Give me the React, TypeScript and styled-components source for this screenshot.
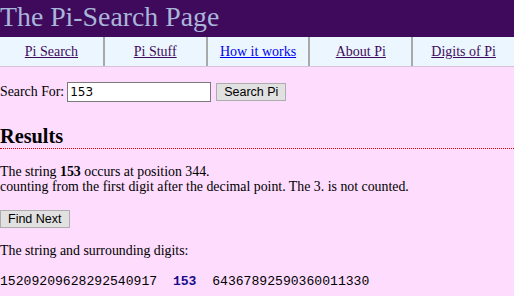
import React from "react";
import styled, { createGlobalStyle } from "styled-components";

const GlobalStyle = createGlobalStyle`
  html, body {
    margin: 0;
    padding: 0;
    background: #fddcfd;
  }
  body {
    font-family: "Liberation Serif", "Times New Roman", serif;
    font-size: 13.85px;
    color: #000;
  }
`;

const links = [
  { label: "Pi Search", visited: true },
  { label: "Pi Stuff", visited: true },
  { label: "How it works", visited: false },
  { label: "About Pi", visited: true },
  { label: "Digits of Pi", visited: true },
];

function App() {
  return (
    <Page>
      <GlobalStyle />
      <Header>
        <Title>The Pi-Search Page</Title>
      </Header>
      <Nav>
        {links.map((l) => (
          <NavCell key={l.label}>
            <NavLink href="#" $visited={l.visited}>
              {l.label}
            </NavLink>
          </NavCell>
        ))}
      </Nav>

      <SearchForm onSubmit={(e) => e.preventDefault()}>
        <label htmlFor="q">Search For:</label>
        <SearchInput id="q" defaultValue="153" />
        <Button type="submit">Search Pi</Button>
      </SearchForm>

      <Results>Results</Results>

      <Para $top={15}>
        The string <b>153</b> occurs at position 344.
        <br />
        counting from the first digit after the decimal point. The 3. is not
        counted.
      </Para>

      <Button type="button">Find Next</Button>

      <Para $top={15}>The string and surrounding digits:</Para>

      <Digits>
        15209209628292540917{"  "}
        <Match>153</Match>
        {"  "}64367892590360011330
      </Digits>
    </Page>
  );
}

export default App;

const Page = styled.div`
  width: 514px;
  min-height: 296px;
`;

const Header = styled.div`
  background-color: #3f0a5c;
  height: 37px;
  display: flex;
  align-items: center;
`;

const Title = styled.h1`
  margin: -3px 0 0;
  font-size: 27.8px;
  font-weight: normal;
  color: #a9b5d9;
  line-height: 1;
`;

const Nav = styled.div`
  display: grid;
  grid-template-columns: repeat(5, 1fr);
  background-color: #ebf6ff;
  height: 29px;
  border-bottom: 1px solid #d6c4d6;
`;

const NavCell = styled.div`
  display: flex;
  align-items: center;
  justify-content: center;
  & + & {
    border-left: 2px solid #a9a9a9;
  }
`;

const NavLink = styled.a<{ $visited: boolean }>`
  color: ${(p) => (p.$visited ? "#3f0a5c" : "#0000ee")};
  text-decoration: underline;
  font-size: 14px;
`;

const SearchForm = styled.form`
  display: flex;
  align-items: center;
  margin: 14px 0 0;
  height: 22px;
`;

const SearchInput = styled.input`
  width: 138px;
  height: 16px;
  margin: 0 5px 0 3px;
  padding: 1px 2px;
  border: 1px solid #7a7a7a;
  font-family: "DejaVu Sans", Tahoma, sans-serif;
  font-size: 12px;
  background: #fff;
`;

const Button = styled.button`
  font-family: "Liberation Sans", Tahoma, sans-serif;
  font-size: 12.5px;
  background: #e1e1e1;
  border: 1px solid #adadad;
  color: #000;
  height: 18px;
  padding: 0 7px;
  margin: 0;
`;

const Results = styled.h2`
  font-size: 20.3px;
  font-weight: bold;
  margin: 22px 0 2px;
  padding: 0;
  border-bottom: 1px dotted #e00000;
  line-height: 23px;
`;

const Para = styled.p<{ $top?: number }>`
  margin: ${(p) => p.$top ?? 14}px 0 16px;
  line-height: 15px;
`;

const Digits = styled.div`
  font-family: "Liberation Mono", "Courier New", monospace;
  font-size: 13.1px;
  white-space: pre;
  line-height: 15px;
`;

const Match = styled.b`
  color: #1a0a8c;
`;
